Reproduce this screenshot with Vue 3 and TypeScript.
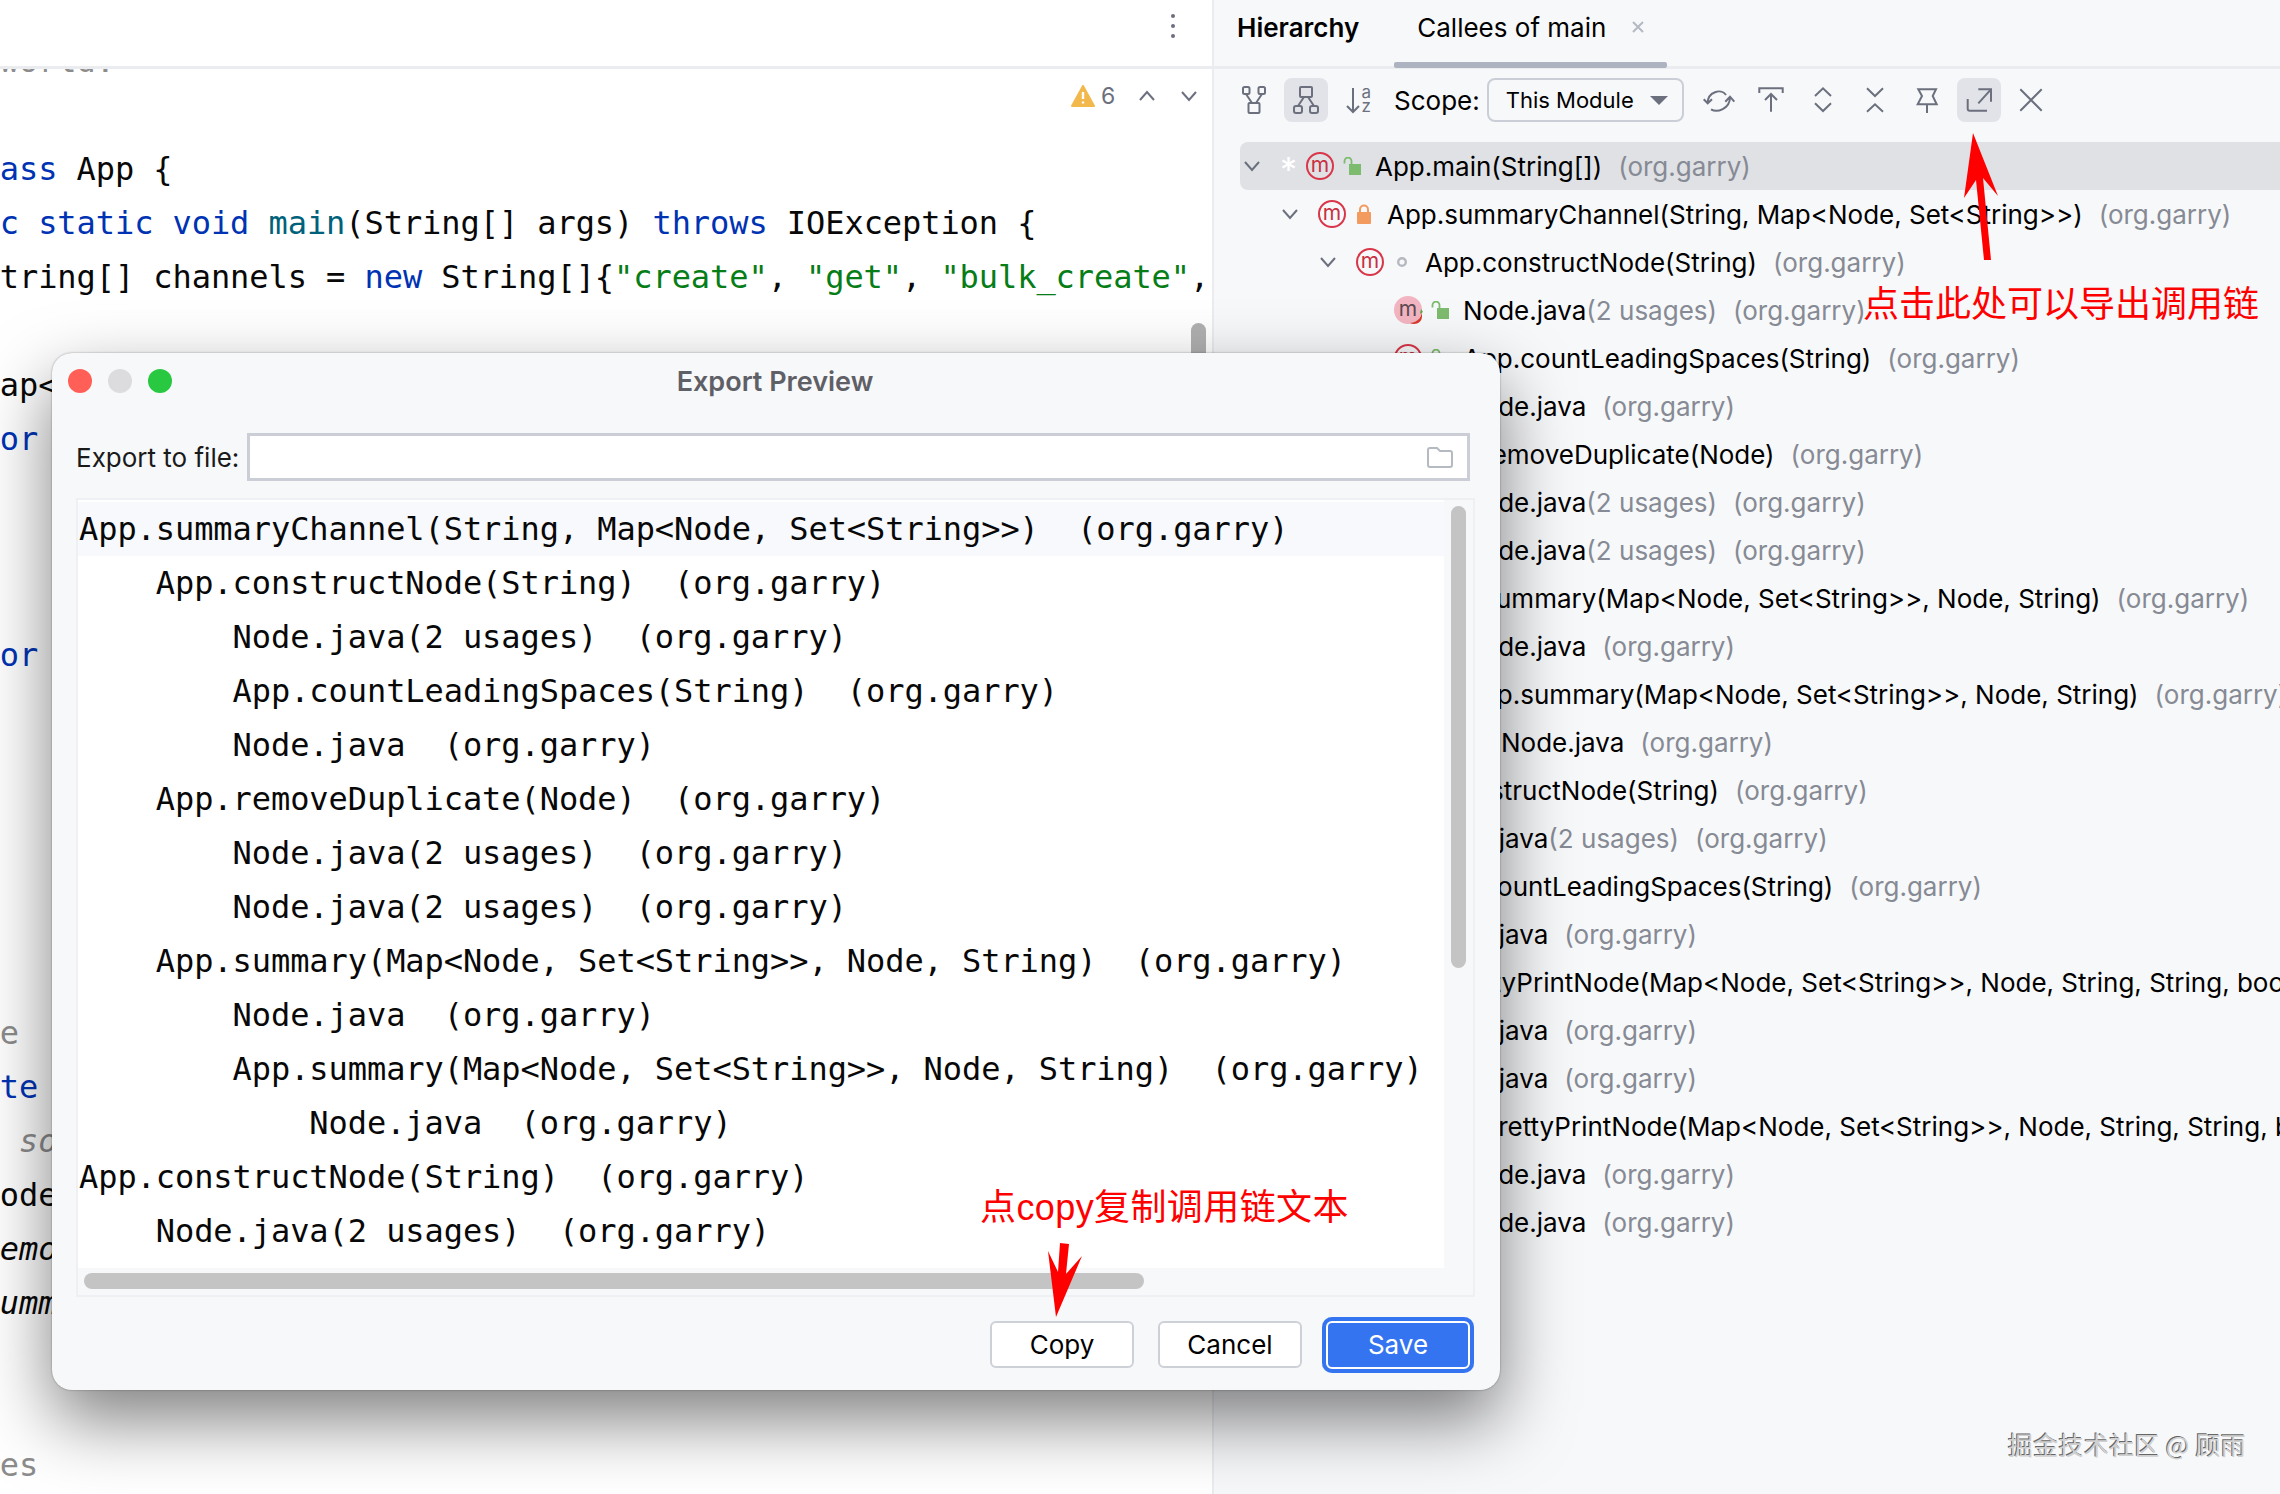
<script setup lang="ts">
interface Row {
  d: number
  name: string
  usages?: boolean
  chev?: boolean
  star?: boolean
  pink?: boolean
  vis?: 'open' | 'lock' | 'dot'
}

const sig = 'Map<Node, Set<String>>'
const rows: Row[] = [
  { d: 0, name: 'App.main(String[])', chev: true, star: true },
  { d: 1, name: `App.summaryChannel(String, ${sig})`, chev: true, vis: 'lock' },
  { d: 2, name: 'App.constructNode(String)', chev: true, vis: 'dot' },
  { d: 3, name: 'Node.java', usages: true, pink: true },
  { d: 3, name: 'App.countLeadingSpaces(String)' },
  { d: 3, name: 'Node.java' },
  { d: 2, name: 'App.removeDuplicate(Node)' },
  { d: 3, name: 'Node.java', usages: true },
  { d: 3, name: 'Node.java', usages: true },
  { d: 2, name: `App.summary(${sig}, Node, String)` },
  { d: 3, name: 'Node.java' },
  { d: 3, name: `App.summary(${sig}, Node, String)` },
  { d: 4, name: 'Node.java' },
  { d: 1, name: 'App.constructNode(String)' },
  { d: 2, name: 'Node.java', usages: true },
  { d: 2, name: 'App.countLeadingSpaces(String)' },
  { d: 2, name: 'Node.java' },
  { d: 1, name: `App.prettyPrintNode(${sig}, Node, String, String, boolean)` },
  { d: 2, name: 'Node.java' },
  { d: 2, name: 'Node.java' },
  { d: 2, name: `App.prettyPrintNode(${sig}, Node, String, String, boolean)` },
  { d: 3, name: 'Node.java' },
  { d: 3, name: 'Node.java' },
]

const exportLines: string[] = [
  `App.summaryChannel(String, ${sig})  (org.garry)`,
  '    App.constructNode(String)  (org.garry)',
  '        Node.java(2 usages)  (org.garry)',
  '        App.countLeadingSpaces(String)  (org.garry)',
  '        Node.java  (org.garry)',
  '    App.removeDuplicate(Node)  (org.garry)',
  '        Node.java(2 usages)  (org.garry)',
  '        Node.java(2 usages)  (org.garry)',
  `    App.summary(${sig}, Node, String)  (org.garry)`,
  '        Node.java  (org.garry)',
  `        App.summary(${sig}, Node, String)  (org.garry)`,
  '            Node.java  (org.garry)',
  'App.constructNode(String)  (org.garry)',
  '    Node.java(2 usages)  (org.garry)',
]
</script>

<template>
  <div class="screen">
    <section class="editor">
      <header class="ed-head">
        <svg class="kebab" width="6" height="26" viewBox="0 0 6 26"><circle cx="3" cy="3" r="2" /><circle cx="3" cy="13" r="2" /><circle cx="3" cy="23" r="2" /></svg>
      </header>
      <div class="ed-body">
        <pre class="code"><span class="gray"> * Hello world.</span>

<span class="kw">public class</span> App {
    <span class="kw">public static void</span> <span class="fn">main</span>(String[] args) <span class="kw">throws</span> IOException {
        String[] channels = <span class="kw">new</span> String[]{<span class="str">"create"</span>, <span class="str">"get"</span>, <span class="str">"bulk_create"</span>, <span class="str">"delete"</span>};

        Map&lt;
        <span class="kw">for</span>



        <span class="kw">for</span>






         <span class="gray">e</span>
    <span class="kw">private</span>
          <span class="gray it">so</span>
        Node
        <span class="it">removeDuplicate</span>
        <span class="it">summary</span>


        <span class="gray">res</span></pre>
        <div class="inspect">
          <svg width="24" height="22" viewBox="0 0 24 22"><path d="M12 1 23 21H1Z" fill="#f2b84b" stroke="#f2b84b" stroke-width="2" stroke-linejoin="round" /><path d="M12 7v7M12 16.500v2" stroke="#fff" stroke-width="2.400" /></svg>
          <span class="count">6</span>
          <svg class="updown" width="18" height="12" viewBox="0 0 18 12"><path d="M2 10 9 2l7 8" /></svg>
          <svg class="updown" width="18" height="12" viewBox="0 0 18 12"><path d="M2 2l7 8 7-8" /></svg>
        </div>
        <div class="ed-scroll"></div>
      </div>
    </section>

    <section class="panel">
      <header class="tabs">
        <span class="tab-title">Hierarchy</span>
        <span class="tab">Callees of main
          <svg class="tab-x" width="14" height="14" viewBox="0 0 14 14"><path d="M2 2l10 10M12 2 2 12" /></svg>
        </span>
      </header>
      <div class="toolbar">
        <button class="tb">
          <svg viewBox="0 0 32 32"><rect x="5" y="3" width="6.500" height="7" rx="1.500" /><rect x="20.500" y="3" width="6.500" height="7" rx="1.500" /><path d="M8 10l6 9M24 10l-6 9" /><rect x="10.500" y="19" width="11" height="10" rx="1" /></svg>
        </button>
        <button class="tb on">
          <svg viewBox="0 0 32 32"><rect x="10" y="3" width="12" height="10" rx="1" /><path d="M14 13l-6 9M18 13l6 9" /><rect x="4" y="22" width="8" height="7" rx="2" /><rect x="20" y="22" width="8" height="7" rx="2" /></svg>
        </button>
        <button class="tb">
          <svg viewBox="0 0 32 32"><path d="M11 4v24M5 22l6 6 6-6" /><text x="19.500" y="14" class="az">a</text><text x="19.500" y="28" class="az">z</text></svg>
        </button>
        <span class="scope">Scope:</span>
        <div class="combo">This Module<i class="caret"></i></div>
        <div class="tools">
          <button class="tb">
            <svg viewBox="0 0 32 32"><path d="M4.700 19C4.700 8 18 4 23 11M.7 15.300l4 4 4.300-4M27 13C27 25 14 29 8 25.300M22.300 17.700l4.700-5 4.300 5" /></svg>
          </button>
          <button class="tb">
            <svg viewBox="0 0 32 32"><path d="M4.300 9V4.300h23.400V9M16 27.700V10M10 16l6-6 6 6" /></svg>
          </button>
          <button class="tb">
            <svg viewBox="0 0 32 32"><path d="M8 12l8-7.700L24 12M8 19.300l8 7.700 8-7.700" /></svg>
          </button>
          <button class="tb">
            <svg viewBox="0 0 32 32"><path d="M8 4.300l8 7.700 8-7.700M8 27.700l8-7.400 8 7.400" /></svg>
          </button>
          <button class="tb">
            <svg viewBox="0 0 32 32"><path d="M7.300 5.300H25L21.700 12l4 8.300H6.700L11 12ZM16 20.300V29" /></svg>
          </button>
          <button class="tb on">
            <svg viewBox="0 0 32 32"><path d="M4.700 15V24.700a2 2 0 0 0 2 2H24M15.300 19.300 28 5.300M15.300 5.300H28V17.700" /></svg>
          </button>
          <button class="tb">
            <svg viewBox="0 0 32 32"><path d="M5.300 5.300l21.400 21.400M26.700 5.300 5.300 26.700" /></svg>
          </button>
        </div>
      </div>
      <div class="tree">
        <div
          v-for="(r, i) in rows"
          :key="i"
          class="row"
          :class="{ sel: i === 0 }"
          :style="{ paddingLeft: 28 + 38 * r.d + 'px' }"
        >
          <svg class="chev" width="20" height="12" viewBox="0 0 20 12"><path v-if="r.chev" d="M3 2l7 8 7-8" /></svg>
          <span v-if="r.star" class="star">*</span>
          <span class="m" :class="{ pink: r.pink }">m<svg v-if="r.pink" class="pepper" width="16" height="16" viewBox="0 0 16 16"><path d="M14 1c0 6-3 12-12 13 4 2 12 1 12-7z" fill="#d8392b" /><path d="M13 0l2 3-3 2z" fill="#5aa84a" /></svg></span>
          <span class="vis">
            <svg v-if="r.vis === 'lock'" width="14" height="20" viewBox="0 0 14 20"><path d="M3 9V5.500a4 4 0 0 1 8 0V9" fill="none" stroke="#f39a5e" stroke-width="2" /><rect y="8" width="14" height="12" rx="1" fill="#f39a5e" /></svg>
            <svg v-else-if="r.vis === 'dot'" width="12" height="12" viewBox="0 0 12 12"><circle cx="6" cy="6" r="3.800" fill="none" stroke="#b4b8bf" stroke-width="2.400" /></svg>
            <svg v-else width="18" height="18" viewBox="0 0 18 18"><path d="M1.500 6.500V4a3.500 3.500 0 0 1 7 0v4" fill="none" stroke="#7dbb6e" stroke-width="1.800" /><rect x="6" y="7" width="12" height="11" fill="#7dbb6e" /></svg>
          </span>
          <span class="name">{{ r.name }}</span><span v-if="r.usages" class="dim">(2 usages)</span><span class="dim pkg">(org.garry)</span>
        </div>
      </div>
    </section>

    <div class="dialog">
      <div class="title">
        <i class="light red"></i><i class="light grey"></i><i class="light green"></i>
        <span class="title-text">Export Preview</span>
      </div>
      <div class="file-row">
        <label class="file-label">Export to file:</label>
        <div class="file-input">
          <svg width="28" height="24" viewBox="0 0 28 24"><path d="M2 5a2 2 0 0 1 2-2h7l3 3h10a2 2 0 0 1 2 2v12a2 2 0 0 1-2 2H4a2 2 0 0 1-2-2z" fill="none" stroke="#b5b9c2" stroke-width="2" /></svg>
        </div>
      </div>
      <div class="preview">
        <div class="viewport">
          <div v-for="(l, i) in exportLines" :key="i" class="xline" :class="{ cur: i === 0 }">{{ l }}</div>
        </div>
        <div class="vgutter"><div class="vthumb"></div></div>
        <div class="hgutter"><div class="hthumb"></div></div>
      </div>
      <div class="footer">
        <button class="btn">Copy</button>
        <button class="btn">Cancel</button>
        <button class="btn save">Save</button>
      </div>
    </div>

    <span class="note note-top">点击此处可以导出调用链</span>
    <span class="note note-copy">点copy复制调用链文本</span>
    <span class="mark">掘金技术社区 @ 顾雨</span>

    <svg class="arrows" width="2280" height="1494" viewBox="0 0 2280 1494">
      <path d="M1973 133 1998 196 1983 178 1991 260H1984L1976 180 1964 198Z" fill="#f00" />
      <path d="M1056 1317 1048 1251 1058 1272 1060 1243 1069 1244 1066 1274 1082 1256Z" fill="#f00" />
    </svg>
  </div>
</template>

<style>
html, body { margin: 0; background: #fff; }
</style>

<style scoped>
.screen {
  position: relative;
  display: flex;
  width: 2280px;
  height: 1494px;
  overflow: hidden;
  font-family: Inter, "Noto Sans CJK SC", sans-serif;
  color: #000;
}
.editor {
  width: 1212px;
  flex: none;
  display: flex;
  flex-direction: column;
  background: #fff;
}
.ed-head {
  height: 66px;
  flex: none;
  display: flex;
  justify-content: flex-end;
  align-items: center;
  padding-right: 36px;
  border-bottom: 3px solid #ebecf0;
  position: relative;
  z-index: 1;
  background: #fff;
  box-sizing: content-box;
}
.kebab { fill: #6c707e; margin-bottom: 14px; }
.ed-body { position: relative; flex: 1; overflow: hidden; }
.code {
  margin: -35px 0 0 -173px;
  font: 32px/54px "DejaVu Sans Mono", monospace;
  letter-spacing: -0.07px;
  color: #080808;
}
.kw { color: #0033b3; }
.fn { color: #00627a; }
.str { color: #067d17; }
.gray { color: #8c8c8c; }
.it { font-style: italic; }
.inspect {
  position: absolute;
  top: 13px;
  left: 1071px;
  display: flex;
  align-items: center;
  font-size: 23px;
  color: #6c707e;
}
.count { margin: 0 23px 0 6px; }
.updown { fill: none; stroke: #6c707e; stroke-width: 2; margin-right: 24px; }
.ed-scroll {
  position: absolute;
  left: 1191px;
  top: 254px;
  width: 15px;
  height: 80px;
  border-radius: 8px;
  background: #b0b0b0;
}
.panel {
  flex: 1;
  border-left: 2px solid #ebecf0;
  background: #f7f8fa;
  min-width: 0;
}
.tabs {
  border-bottom: 3px solid #ebecf0;
  display: flex;
  align-items: center;
  padding: 0 0 12px 23px;
  box-sizing: border-box;
  height: 69px;
  font-size: 26px;
  position: relative;
}
.tab-title { font-weight: 600; }
.tab { margin-left: 58px; display: flex; align-items: center; }
.tab::after {
  content: "";
  position: absolute;
  left: 180px;
  bottom: -2px;
  width: 273px;
  height: 6px;
  border-radius: 2px;
  background: #aeb3c2;
}
.tab-x { margin-left: 25px; fill: none; stroke: #b5b9c2; stroke-width: 2; }
.toolbar {
  display: flex;
  align-items: center;
  height: 44px;
  margin-top: 9px;
  padding-left: 18px;
}
.tb {
  width: 44px;
  height: 44px;
  padding: 6px;
  margin-right: 8px;
  flex: none;
  border: 0;
  border-radius: 8px;
  background: transparent;
}
.tb.on { background: #e1e3e8; }
.tb svg {
  display: block;
  width: 32px;
  height: 32px;
  overflow: visible;
  fill: none;
  stroke: #6c707e;
  stroke-width: 2;
}
.az { font: 17px Inter, sans-serif; fill: #6c707e; stroke: none; }
.scope { font-size: 26px; margin-left: 6px; }
.combo {
  box-sizing: border-box;
  width: 197px;
  height: 44px;
  margin-left: 7px;
  padding-left: 17px;
  display: flex;
  align-items: center;
  border: 2px solid #cbced6;
  border-radius: 8px;
  font-size: 22px;
}
.caret {
  margin-left: 16px;
  border-left: 9px solid transparent;
  border-right: 9px solid transparent;
  border-top: 9px solid #6c707e;
}
.tools { display: flex; margin-left: 13px; }
.tree { margin-top: 20px; }
.row {
  height: 48px;
  display: flex;
  align-items: center;
  white-space: nowrap;
  font-size: 26px;
  box-sizing: border-box;
}
.row.sel {
  background: #dfe1e5;
  margin-left: 26px;
  padding-left: 2px !important;
  border-radius: 8px 0 0 8px;
}
.chev { flex: none; fill: none; stroke: #6c707e; stroke-width: 2; margin-right: 18px; }
.star { width: 26px; flex: none; color: #fff; font-size: 34px; line-height: 34px; height: 26px; }
.m {
  position: relative;
  box-sizing: border-box;
  flex: none;
  width: 28px;
  height: 28px;
  border-radius: 50%;
  border: 2px solid #d9364a;
  color: #c9303f;
  display: flex;
  align-items: center;
  justify-content: center;
  font-size: 21px;
  line-height: 1;
  padding-bottom: 3px;
}
.m.pink { background: #f2b5c1; border-color: #f2b5c1; color: #5c4a50; }
.pepper { position: absolute; right: -4px; bottom: -3px; }
.vis {
  flex: none;
  width: 18px;
  margin: 0 14px 0 9px;
  display: flex;
  justify-content: center;
}
.dim { color: #868a94; }
.pkg { margin-left: 16px; }
.dialog {
  position: absolute;
  left: 52px;
  top: 353px;
  width: 1448px;
  height: 1037px;
  display: flex;
  flex-direction: column;
  box-sizing: border-box;
  background: #f7f8fa;
  border-radius: 20px;
  box-shadow: 0 30px 70px rgba(0, 0, 0, 0.5), 0 0 2px rgba(0, 0, 0, 0.4);
}
.title { height: 56px; display: flex; align-items: center; padding-left: 16px; flex: none; position: relative; margin-bottom: 24px; }
.light { width: 24px; height: 24px; border-radius: 50%; margin-right: 16px; }
.red { background: #ff5f57; }
.grey { background: #dcdcdf; }
.green { background: #28c840; }
.title-text {
  position: absolute;
  left: 0;
  right: 0;
  width: 1446px;
  text-align: center;
  font-size: 27px;
  font-weight: 600;
  color: #5f6066;
}
.file-row { display: flex; align-items: center; height: 48px; padding-left: 24px; flex: none; margin-bottom: 17px; }
.file-label { font-size: 26px; width: 171px; white-space: nowrap; color: #1a1a1a; }
.file-input {
  box-sizing: border-box;
  width: 1223px;
  height: 48px;
  border: 3px solid #cbced6;
  background: #fff;
  display: flex;
  align-items: center;
  justify-content: flex-end;
  padding-right: 13px;
}
.preview {
  position: relative;
  box-sizing: border-box;
  width: 1399px;
  height: 799px;
  margin-left: 24px;
  flex: none;
  border: 2px solid #eff0f3;
  display: grid;
  grid-template-columns: 1fr 29px;
  grid-template-rows: 1fr 27px;
}
.viewport {
  padding: 2px 0 0;
  background: #fff;
  overflow: hidden;
  min-height: 0;
  grid-column: 1;
  grid-row: 1;
}
.xline {
  height: 54px;
  line-height: 54px;
  padding-left: 1px;
  white-space: pre;
  font-family: "DejaVu Sans Mono", monospace;
  font-size: 32px;
  letter-spacing: -0.07px;
  color: #080808;
}
.xline.cur { background: #f7f9fd; }
.vgutter { grid-column: 2; grid-row: 1; padding: 6px 0 0 7px; }
.vthumb { width: 15px; height: 462px; border-radius: 8px; background: #c4c4c4; }
.hgutter { grid-column: 1; grid-row: 2; padding: 5px 0 0 6px; }
.hthumb { width: 1060px; height: 16px; border-radius: 8px; background: #c4c4c4; }
.footer {
  flex: 1;
  display: flex;
  align-items: center;
  justify-content: flex-end;
  padding: 2px 26px 0 0;
  gap: 24px;
}
.btn {
  box-sizing: border-box;
  width: 144px;
  height: 47px;
  border: 2px solid #cdd0d7;
  border-radius: 6px;
  background: #fff;
  font: 26px Inter, sans-serif;
  color: #000;
}
.btn.save {
  width: 152px;
  height: 56px;
  margin-left: -4px;
  border: 0;
  border-radius: 10px;
  background: #3574f0;
  color: #fff;
  box-shadow: inset 0 0 0 4px #3574f0, inset 0 0 0 6px #fff;
}
.note {
  position: absolute;
  color: #f00;
  font-size: 36px;
  line-height: 50px;
  font-family: "Liberation Sans", "Noto Sans CJK SC", sans-serif;
  white-space: nowrap;
}
.note-top { left: 1863px; top: 280px; }
.note-copy { left: 980px; top: 1183px; letter-spacing: 0.4px; }
.mark {
  position: absolute;
  left: 2008px;
  top: 1427px;
  font: 25px/34px "Noto Sans CJK SC", sans-serif;
  letter-spacing: 0.3px;
  color: #d0d0d0;
  text-shadow: -1px -1px 0 #666;
  white-space: nowrap;
}
.arrows { position: absolute; left: 0; top: 0; pointer-events: none; }
</style>
